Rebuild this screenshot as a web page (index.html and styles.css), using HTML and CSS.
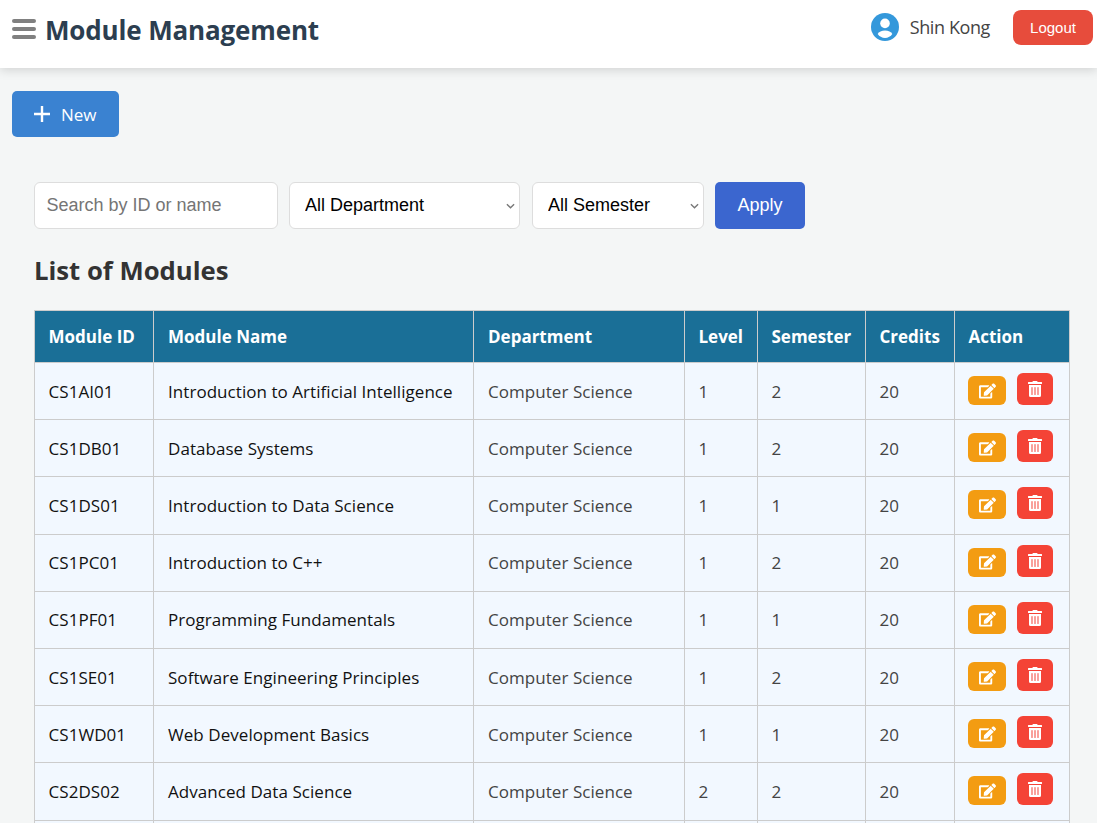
FILE: index.html
```html
<!DOCTYPE html>
<html lang="en">
<head>
    <meta charset="UTF-8">
    <meta name="viewport" content="width=device-width, initial-scale=1.0">
    <title>Module Management</title>
    <link rel="stylesheet" href="styles.css">
</head>
<body>
    <svg class="icon-defs" aria-hidden="true">
        <symbol id="icon-edit" viewBox="0 0 576 512">
            <path d="M402.6 83.2l90.2 90.2c3.8 3.8 3.8 10 0 13.8L274.4 405.6l-92.8 10.3c-12.4 1.4-22.9-9.1-21.5-21.5l10.3-92.8L388.8 83.2c3.8-3.8 10-3.8 13.8 0zm162-22.9l-48.8-48.8c-15.2-15.2-39.9-15.2-55.2 0l-35.4 35.4c-3.8 3.8-3.8 10 0 13.8l90.2 90.2c3.8 3.8 10 3.8 13.8 0l35.4-35.4c15.2-15.3 15.2-40 0-55.2zM384 346.2V448H64V128h229.8c3.2 0 6.2-1.3 8.5-3.5l40-40c7.6-7.6 2.2-20.5-8.5-20.5H48C21.5 64 0 85.5 0 112v352c0 26.5 21.5 48 48 48h352c26.5 0 48-21.5 48-48V306.2c0-10.7-12.9-16-20.5-8.5l-40 40c-2.2 2.3-3.5 5.3-3.5 8.5z"/>
        </symbol>
        <symbol id="icon-trash" viewBox="0 0 448 512">
            <path d="M32 464a48 48 0 0 0 48 48h288a48 48 0 0 0 48-48V128H32zm272-256a16 16 0 0 1 32 0v224a16 16 0 0 1-32 0zm-96 0a16 16 0 0 1 32 0v224a16 16 0 0 1-32 0zm-96 0a16 16 0 0 1 32 0v224a16 16 0 0 1-32 0zM432 32H312l-9.4-18.7A24 24 0 0 0 281.1 0H166.8a23.72 23.72 0 0 0-21.4 13.3L136 32H16A16 16 0 0 0 0 48v32a16 16 0 0 0 16 16h416a16 16 0 0 0 16-16V48a16 16 0 0 0-16-16z"/>
        </symbol>
    </svg>

    <header class="topbar">
        <div class="topbar-left">
            <button class="menu-btn" type="button" aria-label="Menu">
                <span></span><span></span><span></span>
            </button>
            <h1 class="page-title">Module Management</h1>
        </div>
        <div class="topbar-right">
            <svg class="user-icon" viewBox="0 0 512 512" aria-hidden="true">
                <circle cx="256" cy="256" r="256" fill="#3498db"/>
                <circle cx="256" cy="190" r="88" fill="#fff"/>
                <path fill="#fff" d="M256 322c-62 0-112 24-134 62 30 44 79 72 134 72s104-28 134-72c-22-38-72-62-134-62z"/>
            </svg>
            <span class="user-name">Shin Kong</span>
            <button class="logout-btn" type="button">Logout</button>
        </div>
    </header>

    <main class="content">
        <button class="new-btn" type="button">
            <svg class="plus-icon" viewBox="0 0 16 16" aria-hidden="true">
                <path d="M8 0v16M0 8h16" stroke="#fff" stroke-width="2.4" fill="none"/>
            </svg>
            New
        </button>

        <section class="modules">
            <form class="filters">
                <input class="field search" type="text" placeholder="Search by ID or name">
                <select class="field select-dept">
                    <option>All Department</option>
                </select>
                <select class="field select-sem">
                    <option>All Semester</option>
                </select>
                <button class="apply-btn" type="button">Apply</button>
            </form>

            <h2 class="list-title">List of Modules</h2>

            <table class="module-table">
                <colgroup>
                    <col class="col-id">
                    <col class="col-name">
                    <col class="col-dept">
                    <col class="col-level">
                    <col class="col-sem">
                    <col class="col-credits">
                    <col class="col-action">
                </colgroup>
                <thead>
                    <tr>
                        <th>Module ID</th>
                        <th>Module Name</th>
                        <th>Department</th>
                        <th>Level</th>
                        <th>Semester</th>
                        <th>Credits</th>
                        <th>Action</th>
                    </tr>
                </thead>
                <tbody>
                    <tr>
                        <td class="cell-dark">CS1AI01</td>
                        <td class="cell-dark">Introduction to Artificial Intelligence</td>
                        <td>Computer Science</td>
                        <td>1</td>
                        <td>2</td>
                        <td>20</td>
                        <td><div class="actions">
                            <button class="edit-btn" type="button" aria-label="Edit"><svg><use href="#icon-edit"/></svg></button>
                            <button class="delete-btn" type="button" aria-label="Delete"><svg><use href="#icon-trash"/></svg></button>
                        </div></td>
                    </tr>
                    <tr>
                        <td class="cell-dark">CS1DB01</td>
                        <td class="cell-dark">Database Systems</td>
                        <td>Computer Science</td>
                        <td>1</td>
                        <td>2</td>
                        <td>20</td>
                        <td><div class="actions">
                            <button class="edit-btn" type="button" aria-label="Edit"><svg><use href="#icon-edit"/></svg></button>
                            <button class="delete-btn" type="button" aria-label="Delete"><svg><use href="#icon-trash"/></svg></button>
                        </div></td>
                    </tr>
                    <tr>
                        <td class="cell-dark">CS1DS01</td>
                        <td class="cell-dark">Introduction to Data Science</td>
                        <td>Computer Science</td>
                        <td>1</td>
                        <td>1</td>
                        <td>20</td>
                        <td><div class="actions">
                            <button class="edit-btn" type="button" aria-label="Edit"><svg><use href="#icon-edit"/></svg></button>
                            <button class="delete-btn" type="button" aria-label="Delete"><svg><use href="#icon-trash"/></svg></button>
                        </div></td>
                    </tr>
                    <tr>
                        <td class="cell-dark">CS1PC01</td>
                        <td class="cell-dark">Introduction to C++</td>
                        <td>Computer Science</td>
                        <td>1</td>
                        <td>2</td>
                        <td>20</td>
                        <td><div class="actions">
                            <button class="edit-btn" type="button" aria-label="Edit"><svg><use href="#icon-edit"/></svg></button>
                            <button class="delete-btn" type="button" aria-label="Delete"><svg><use href="#icon-trash"/></svg></button>
                        </div></td>
                    </tr>
                    <tr>
                        <td class="cell-dark">CS1PF01</td>
                        <td class="cell-dark">Programming Fundamentals</td>
                        <td>Computer Science</td>
                        <td>1</td>
                        <td>1</td>
                        <td>20</td>
                        <td><div class="actions">
                            <button class="edit-btn" type="button" aria-label="Edit"><svg><use href="#icon-edit"/></svg></button>
                            <button class="delete-btn" type="button" aria-label="Delete"><svg><use href="#icon-trash"/></svg></button>
                        </div></td>
                    </tr>
                    <tr>
                        <td class="cell-dark">CS1SE01</td>
                        <td class="cell-dark">Software Engineering Principles</td>
                        <td>Computer Science</td>
                        <td>1</td>
                        <td>2</td>
                        <td>20</td>
                        <td><div class="actions">
                            <button class="edit-btn" type="button" aria-label="Edit"><svg><use href="#icon-edit"/></svg></button>
                            <button class="delete-btn" type="button" aria-label="Delete"><svg><use href="#icon-trash"/></svg></button>
                        </div></td>
                    </tr>
                    <tr>
                        <td class="cell-dark">CS1WD01</td>
                        <td class="cell-dark">Web Development Basics</td>
                        <td>Computer Science</td>
                        <td>1</td>
                        <td>1</td>
                        <td>20</td>
                        <td><div class="actions">
                            <button class="edit-btn" type="button" aria-label="Edit"><svg><use href="#icon-edit"/></svg></button>
                            <button class="delete-btn" type="button" aria-label="Delete"><svg><use href="#icon-trash"/></svg></button>
                        </div></td>
                    </tr>
                    <tr>
                        <td class="cell-dark">CS2DS02</td>
                        <td class="cell-dark">Advanced Data Science</td>
                        <td>Computer Science</td>
                        <td>2</td>
                        <td>2</td>
                        <td>20</td>
                        <td><div class="actions">
                            <button class="edit-btn" type="button" aria-label="Edit"><svg><use href="#icon-edit"/></svg></button>
                            <button class="delete-btn" type="button" aria-label="Delete"><svg><use href="#icon-trash"/></svg></button>
                        </div></td>
                    </tr>
                    <tr>
                        <td></td><td></td><td></td><td></td><td></td><td></td><td></td>
                    </tr>
                </tbody>
            </table>
        </section>
    </main>
</body>
</html>
```

FILE: styles.css
```css
* {
    box-sizing: border-box;
}

html, body {
    height: 823px;
    overflow: hidden;
}

body {
    margin: 0;
    font-family: "Open Sans", "Noto Sans", sans-serif;
    background-color: #f4f6f6;
    color: #333;
}

.icon-defs {
    display: none;
}

.topbar {
    display: flex;
    justify-content: space-between;
    align-items: center;
    height: 68px;
    padding: 0 4px 8px 12px;
    background-color: #fff;
    box-shadow: 0 2px 10px rgba(0, 0, 0, 0.15);
}

.topbar-left, .topbar-right {
    display: flex;
    align-items: center;
}

.topbar-right {
    margin-bottom: 6px;
}

.menu-btn {
    display: flex;
    flex-direction: column;
    gap: 4px;
    width: 24px;
    padding: 0;
    margin: 0 10px 2px 0;
    border: none;
    background: none;
}

.menu-btn span {
    display: block;
    height: 4px;
    border-radius: 2px;
    background-color: #808080;
}

.page-title {
    margin: 0 0 0 -1px;
    font-size: 26px;
    font-weight: 700;
    color: #2c3e50;
    letter-spacing: -0.15px;
}

.user-icon {
    width: 28px;
    height: 28px;
    margin-right: 11px;
}

.user-name {
    font-size: 18px;
    color: #444;
    margin-right: 23px;
    letter-spacing: -0.4px;
}

.logout-btn {
    width: 80px;
    height: 35px;
    border: none;
    border-radius: 8px;
    background-color: #e74c3c;
    color: #fff;
    font-family: "Liberation Sans", sans-serif;
    font-size: 15px;
}

.content {
    padding: 23px 12px 0;
}

.new-btn {
    display: flex;
    align-items: center;
    gap: 11px;
    width: 107px;
    height: 46px;
    padding: 0 0 0 22px;
    border: none;
    border-radius: 5px;
    background-color: #3a82d1;
    color: #fff;
    font-family: "Open Sans", sans-serif;
    font-size: 17px;
}

.plus-icon {
    width: 16px;
    height: 16px;
}

.modules {
    padding: 45px 27px 0 22px;
}

.filters {
    display: flex;
    gap: 11px;
    height: 47px;
}

.field {
    height: 47px;
    border: 1px solid #ddd;
    border-radius: 6px;
    background-color: #fff;
    font-family: "Liberation Sans", sans-serif;
    font-size: 18px;
    color: #000;
}

select.field {
    appearance: none;
    padding: 0 15px 2px;
    background-image: url("data:image/svg+xml,%3Csvg xmlns='http://www.w3.org/2000/svg' viewBox='0 0 10 6'%3E%3Cpath d='M1 1l4 4 4-4' fill='none' stroke='%23777' stroke-width='1.5'/%3E%3C/svg%3E");
    background-repeat: no-repeat;
    background-position: right 4px center;
    background-size: 9px 6px;
}

.search {
    width: 244px;
    padding: 0 11.5px;
}

.search::placeholder {
    color: #757575;
}

.select-dept {
    width: 231px;
    margin-right: 1px;
}

.select-sem {
    width: 172px;
}

.apply-btn {
    width: 90px;
    height: 47px;
    border: none;
    border-radius: 5px;
    background-color: #3b66cf;
    color: #fff;
    font-family: "Liberation Sans", sans-serif;
    font-size: 18px;
}

.list-title {
    margin: 25px 0 22px;
    font-size: 25.7px;
    line-height: 34px;
    font-weight: 700;
    color: #333;
}

.module-table {
    width: 1035px;
    border-collapse: collapse;
    table-layout: fixed;
    font-size: 17px;
}

.col-id { width: 119px; }
.col-name { width: 320px; }
.col-dept { width: 211px; }
.col-level { width: 73px; }
.col-sem { width: 108px; }
.col-credits { width: 89px; }
.col-action { width: 115px; }

.module-table th, .module-table td {
    border: 1px solid #ccc;
    padding: 0 13.5px;
    text-align: left;
    white-space: nowrap;
}

.module-table th:nth-child(2), .module-table td:nth-child(2),
.module-table th:nth-child(3), .module-table td:nth-child(3) {
    padding-left: 14px;
}

.module-table th {
    height: 52px;
    background-color: #1a6f97;
    color: #fff;
    font-weight: 700;
}

.module-table td {
    height: 57.2px;
    background-color: #f2f8ff;
    color: #444;
    letter-spacing: 0.05px;
}

.module-table td.cell-dark {
    color: #111;
}

.actions {
    display: flex;
    gap: 11px;
    margin-left: -0.5px;
    padding-bottom: 4px;
}

.edit-btn, .delete-btn {
    display: flex;
    align-items: center;
    justify-content: center;
    padding: 0;
    border: none;
    border-radius: 6px;
    fill: #fff;
}

.edit-btn {
    width: 38px;
    height: 29px;
    margin-top: 3px;
    background-color: #f39c12;
}

.delete-btn {
    width: 36px;
    height: 32px;
    background-color: #f44336;
}

.edit-btn svg {
    width: 17px;
    height: 16px;
}

.delete-btn svg {
    width: 14px;
    height: 16px;
}
```
